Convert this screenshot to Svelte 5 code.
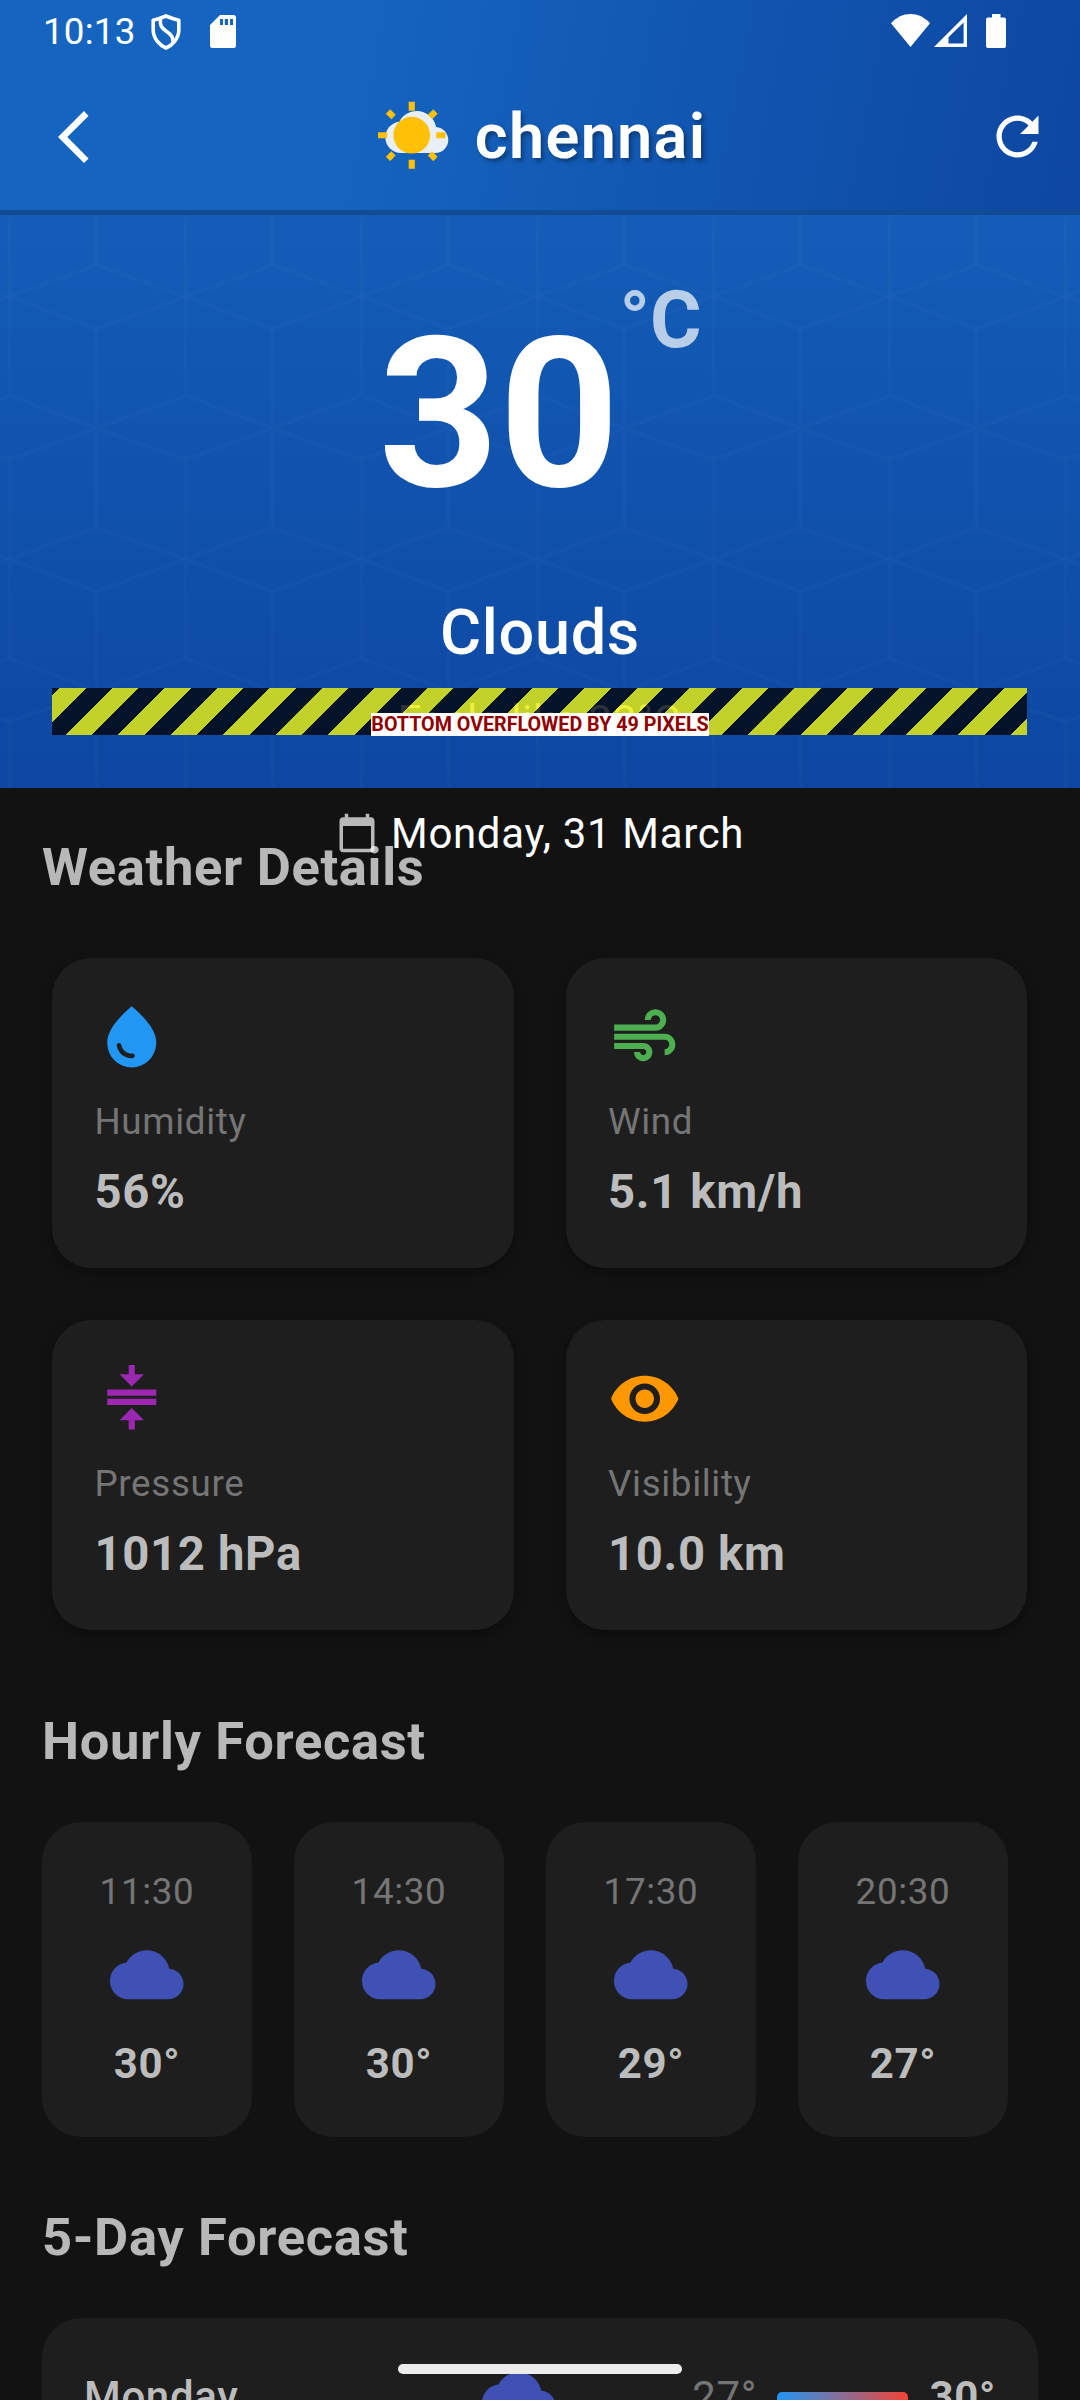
<script>
  const cloudPath =
    'M19.35 10.04C18.67 6.59 15.64 4 12 4 9.11 4 6.6 5.64 5.35 8.04 2.34 8.36 0 10.91 0 14c0 3.31 2.69 6 6 6h13c2.76 0 5-2.24 5-5 0-2.64-2.05-4.78-4.65-4.96z';

  const details = [
    {
      label: 'Humidity',
      value: '56%',
      tone: 'blue',
      path: 'M12 2c-5.33 4.55-8 8.48-8 11.8 0 4.98 3.8 8.2 8 8.2s8-3.22 8-8.2C20 10.48 17.33 6.55 12 2zM7.83 14c.37 0 .67.26.74.62.41 2.22 2.28 2.98 3.64 2.87.43-.02.79.32.79.75 0 .4-.32.73-.72.75-2.13.13-4.62-1.09-5.19-4.12-.08-.45.28-.87.74-.87z'
    },
    {
      label: 'Wind',
      value: '5.1 km/h',
      tone: 'green',
      path: 'M14.5 17c0 1.65-1.35 3-3 3s-3-1.35-3-3h2c0 .55.45 1 1 1s1-.45 1-1-.45-1-1-1H2v-2h9.5c1.65 0 3 1.35 3 3zM19 6.5C19 4.57 17.43 3 15.5 3S12 4.57 12 6.5h2c0-.83.67-1.5 1.5-1.5s1.5.67 1.5 1.5S16.33 8 15.5 8H2v2h13.5c1.93 0 3.5-1.57 3.5-3.5zm-.5 4.5H2v2h16.5c.83 0 1.5.67 1.5 1.5s-.67 1.5-1.5 1.5v2c1.93 0 3.5-1.57 3.5-3.5S20.43 11 18.5 11z'
    },
    {
      label: 'Pressure',
      value: '1012 hPa',
      tone: 'purple',
      path: 'M8 19h3v3h2v-3h3l-4-4-4 4zm8-15h-3V1h-2v3H8l4 4 4-4zM4 9v2h16V9H4zm0 3h16v2H4z'
    },
    {
      label: 'Visibility',
      value: '10.0 km',
      tone: 'orange',
      path: 'M12 4.5C7 4.5 2.73 7.61 1 12c1.73 4.39 6 7.5 11 7.5s9.27-3.11 11-7.5c-1.73-4.39-6-7.5-11-7.5zM12 17c-2.76 0-5-2.24-5-5s2.24-5 5-5 5 2.24 5 5-2.24 5-5 5zm0-8c-1.66 0-3 1.34-3 3s1.34 3 3 3 3-1.34 3-3-1.34-3-3-3z'
    }
  ];

  const hours = [
    { time: '11:30', temp: '30°' },
    { time: '14:30', temp: '30°' },
    { time: '17:30', temp: '29°' },
    { time: '20:30', temp: '27°' }
  ];

  const days = [{ day: 'Monday', low: '27°', high: '30°' }];
</script>

<div class="screen">
  <header class="header">
    <div class="status">
      <div class="status-left">
        <span class="clock">10:13</span>
        <svg class="shield" viewBox="0 0 30 36">
          <path d="M15 2Q21.500 4.800 27.800 6.300V16C27.800 24.500 21.500 31 15 34 8.500 31 2.200 24.500 2.200 16V6.300Q8.500 4.800 15 2Z" />
          <path d="M9.300 5C9 11 10 13.500 15 17 21 21 22.500 24 21.800 29" />
        </svg>
        <svg class="sd" viewBox="0 0 26 33" fill-rule="evenodd">
          <path d="M10 0H23.500A2.500 2.500 0 0 1 26 2.500V30.500A2.500 2.500 0 0 1 23.500 33H2.500A2.500 2.500 0 0 1 0 30.500V10zM10 4V10H13V4zM14.800 4V10H18V4zM20 4V10H23V4z" />
        </svg>
      </div>
      <div class="status-right">
        <svg class="wifi" viewBox="0 0 39 33"><path d="M0 9.300C11-3.100 28-3.100 39 9.300L19.500 33z" /></svg>
        <svg class="signal" viewBox="0 0 33 33" fill-rule="evenodd">
          <path d="M33 0V33H0zM29.600 8.500L14.500 23.300V29.500H29.600z" />
        </svg>
        <svg class="battery" viewBox="0 0 20 34">
          <path d="M6 0H14.500V3.500H18A2 2 0 0 1 20 5.500V32A2 2 0 0 1 18 34H2A2 2 0 0 1 0 32V5.500A2 2 0 0 1 2 3.500H6z" />
        </svg>
      </div>
    </div>
    <div class="appbar">
      <svg class="back" viewBox="0 0 31 52"><path d="M26 0L30.500 5 9.300 26 30.500 47.500 26 52 0 26z" /></svg>
      <div class="title">
        <svg class="title-icon" viewBox="0 0 73.5 73.5">
          <path class="cloud" transform="translate(10.3 0.6) scale(2.625)" d={cloudPath} />
          <path
            class="sun"
            transform="scale(3.0625)"
            d="M6.760 4.840l-1.800-1.790-1.410 1.410 1.790 1.790 1.420-1.410zM4 10.500H1v2h3v-2zm9-9.950h-2V3.500h2V.55zm7.450 3.910l-1.410-1.410-1.790 1.790 1.410 1.410 1.790-1.790zm-3.210 13.700l1.790 1.800 1.410-1.410-1.800-1.790-1.400 1.400zM20 10.500v2h3v-2h-3zm-8-5c-3.310 0-6 2.690-6 6s2.690 6 6 6 6-2.690 6-6-2.690-6-6-6zm-1 16.950h2V19.500h-2v2.950zm-7.450-3.910l1.410 1.410 1.790-1.800-1.410-1.410-1.790 1.800z"
          />
        </svg>
        <h1>chennai</h1>
      </div>
      <svg class="refresh" viewBox="0 0 24 24">
        <path d="M17.650 6.350C16.200 4.900 14.210 4 12 4c-4.420 0-7.990 3.580-7.990 8s3.570 8 7.990 8c3.730 0 6.840-2.550 7.730-6h-2.080c-.82 2.330-3.040 4-5.650 4-3.310 0-6-2.690-6-6s2.690-6 6-6c1.660 0 3.140.69 4.220 1.780L13 11h7V4l-2.350 2.350z" />
      </svg>
    </div>
  </header>

  <section class="hero">
    <svg class="mesh" width="1080" height="573">
      <defs>
        <pattern id="mesh" width="176" height="262.4" patternUnits="userSpaceOnUse" patternTransform="translate(9.5 49.5)">
          <path d="M0 32.300L87 0.500 176 32.300 87 64.500zM0 0V131M87 64.500V262.400M0 195V262.400M0 131L87 164 176 131M0 195L87 164 176 195M176 0V131M176 195V262.400" />
        </pattern>
      </defs>
      <rect width="1080" height="573" fill="url(#mesh)" />
    </svg>
    <div class="temp"><span class="degrees">30</span><span class="unit">°C</span></div>
    <p class="condition">Clouds</p>
    <div class="overflow">
      <p class="feels">Feels like 33°C</p>
      <div class="stripes"><span>BOTTOM OVERFLOWED BY 49 PIXELS</span></div>
    </div>
    <div class="date">
      <svg viewBox="0 0 24 24">
        <path d="M20 3h-1V1h-2v2H7V1H5v2H4c-1.100 0-2 .9-2 2v16c0 1.100.9 2 2 2h16c1.100 0 2-.9 2-2V5c0-1.100-.9-2-2-2zm0 18H4V8h16v13z" />
      </svg>
      <span>Monday, 31 March</span>
    </div>
  </section>

  <main>
    <h2>Weather Details</h2>
    <div class="details">
      {#each details as item}
        <article class="card detail">
          <svg class={item.tone} viewBox="0 0 24 24"><path d={item.path} /></svg>
          <span class="label">{item.label}</span>
          <strong>{item.value}</strong>
        </article>
      {/each}
    </div>

    <h2 class="hourly-title">Hourly Forecast</h2>
    <div class="hours">
      {#each hours as hour}
        <article class="card hour">
          <span>{hour.time}</span>
          <svg class="indigo" viewBox="0 0 24 24"><path d={cloudPath} /></svg>
          <strong>{hour.temp}</strong>
        </article>
      {/each}
    </div>

    <h2 class="daily-title">5-Day Forecast</h2>
    <div class="card days">
      {#each days as row}
        <div class="day">
          <span class="name">{row.day}</span>
          <svg class="indigo" viewBox="0 0 24 24"><path d={cloudPath} /></svg>
          <span class="low">{row.low}</span>
          <i class="range"></i>
          <strong>{row.high}</strong>
        </div>
      {/each}
    </div>
  </main>
  <div class="home-bar"></div>
</div>

<style>
  :global(body) {
    margin: 0;
    background: #121212;
  }
  h1,
  h2,
  p {
    margin: 0;
  }
  svg {
    display: block;
    flex: none;
    fill: #fff;
  }
  .screen {
    position: relative;
    width: 1080px;
    height: 2400px;
    overflow: hidden;
    background: #121212;
    color: #fff;
    font-family: Roboto, sans-serif;
    letter-spacing: 0.656px;
  }

  .header {
    height: 210px;
    background: linear-gradient(101deg, #1565c0 30%, #0d47a1 100%);
  }
  .status {
    display: flex;
    justify-content: space-between;
    align-items: flex-start;
    height: 63px;
    box-sizing: border-box;
    padding: 13px 74.500px 0 43px;
  }
  .status-left,
  .status-right {
    display: flex;
    align-items: flex-start;
  }
  .clock {
    font-size: 36.75px;
    line-height: 37px;
    letter-spacing: 0.2px;
    width: 107.500px;
  }
  .shield {
    width: 30px;
    height: 36px;
    margin-top: 0.500px;
    fill: none;
    stroke: #fff;
    stroke-width: 3.600;
    stroke-linejoin: round;
  }
  .sd {
    width: 26px;
    height: 33px;
    margin: 2px 0 0 29.500px;
  }
  .wifi {
    width: 39px;
    height: 33px;
    margin-top: 1px;
  }
  .signal {
    width: 33px;
    height: 33px;
    margin: 1px 0 0 4px;
  }
  .battery {
    width: 20px;
    height: 34px;
    margin: 1px 0 0 19px;
  }
  .appbar {
    display: grid;
    grid-template-columns: 100px 1fr 100px;
    align-items: center;
    height: 147px;
  }
  .back {
    width: 31px;
    height: 52px;
    margin-left: 58px;
  }
  .refresh {
    width: 63px;
    height: 63px;
    margin-left: 5.500px;
  }
  .title {
    display: flex;
    justify-content: center;
    align-items: center;
    gap: 26.250px;
    padding-left: 1.500px;
  }
  .title-icon {
    width: 73.500px;
    height: 73.500px;
  }
  .cloud {
    opacity: 0.9;
  }
  .sun {
    fill: #ffc107;
  }
  h1 {
    font-size: 63px;
    font-weight: 600;
    line-height: 74px;
    letter-spacing: 1.3px;
    text-shadow: 2.600px 2.600px 4px rgba(0, 0, 0, 0.35);
  }

  .hero {
    position: relative;
    display: flex;
    flex-direction: column;
    align-items: center;
    box-sizing: border-box;
    height: 578px;
    border-top: 5px solid #104b93;
    padding-top: 65.700px;
    background: linear-gradient(#135db8, #0d47a1);
  }
  .mesh {
    position: absolute;
    inset: 0;
  }
  .mesh path {
    fill: none;
    stroke: #fff;
    stroke-opacity: 0.019;
    stroke-width: 3;
  }
  .temp {
    position: relative;
    display: flex;
    align-items: flex-start;
    font-weight: 700;
    letter-spacing: 0;
  }
  .degrees {
    margin-top: 28px;
    font-size: 210px;
    line-height: 210px;
  }
  .unit {
    font-size: 78.750px;
    line-height: 79px;
    opacity: 0.7;
  }
  .condition {
    position: relative;
    margin-top: 82px;
    font-size: 63px;
    font-weight: 500;
    line-height: 63px;
  }
  .overflow {
    position: relative;
    width: 975px;
    height: 47px;
    margin: 24.300px 1px 0 0;
  }
  .feels {
    padding-top: 11.600px;
    font-size: 42px;
    line-height: 42px;
    text-align: center;
    color: rgba(255, 255, 255, 0.7);
  }
  .stripes {
    position: absolute;
    inset: 0;
    display: flex;
    justify-content: center;
    align-items: flex-end;
    background: repeating-linear-gradient(
      135deg,
      rgba(0, 0, 0, 0.75) 0 5.600px,
      rgba(255, 255, 0, 0.75) 5.600px 24.160px,
      rgba(0, 0, 0, 0.75) 24.160px 37.123px
    );
  }
  .stripes span {
    margin: 0 0 -1px 1px;
    background: #fff;
    color: #900000;
    font-size: 19.690px;
    font-weight: 700;
    line-height: 23px;
    letter-spacing: 0;
    white-space: nowrap;
  }
  .date {
    position: relative;
    display: flex;
    align-items: flex-start;
    gap: 13.125px;
    margin-top: 77px;
    font-size: 42px;
    line-height: 44px;
  }
  .date svg {
    width: 42px;
    height: 42px;
    opacity: 0.7;
  }

  main {
    padding: 52.600px 42px 0;
  }
  h2 {
    font-size: 52.500px;
    font-weight: 700;
    line-height: 53px;
    color: rgba(255, 255, 255, 0.7);
  }
  .card {
    border-radius: 39.400px;
    background: #1e1e1e;
    color: #bcbcbc;
  }
  .details {
    display: grid;
    grid-template-columns: 1fr 1fr;
    gap: 52px;
    margin-top: 64.400px;
    padding: 0 11px 0 10px;
  }
  .detail {
    display: flex;
    flex-direction: column;
    box-sizing: border-box;
    height: 310px;
    padding: 42px 42px 42px 42.500px;
    box-shadow: 0 5px 13px rgba(0, 0, 0, 0.3);
  }
  .detail svg {
    width: 73.500px;
    height: 73.500px;
  }
  .label {
    margin-top: 29.500px;
    font-size: 36.750px;
    line-height: 37px;
    color: #757575;
  }
  .detail strong {
    margin-top: 29px;
    font-size: 47.250px;
    font-weight: 700;
    line-height: 47px;
  }
  .blue {
    fill: #2196f3;
  }
  .green {
    fill: #4caf50;
  }
  .purple {
    fill: #9c27b0;
  }
  .orange {
    fill: #ff9800;
  }
  .indigo {
    width: 73.500px;
    height: 73.500px;
    fill: #3f51b5;
  }
  .hourly-title {
    margin-top: 84.600px;
  }
  .hours {
    display: flex;
    gap: 42px;
    margin-top: 54.400px;
  }
  .hour {
    display: flex;
    flex-direction: column;
    align-items: center;
    box-sizing: border-box;
    width: 210px;
    height: 315px;
    padding-top: 51px;
  }
  .hour span {
    margin-bottom: 28.400px;
    font-size: 36.750px;
    line-height: 37px;
    color: #757575;
  }
  .hour strong {
    margin-top: 30.700px;
    font-size: 42px;
    font-weight: 700;
    line-height: 42px;
  }
  .daily-title {
    margin-top: 73.600px;
  }
  .days {
    height: 400px;
    margin-top: 54px;
    padding: 42px 42px 0;
  }
  .day {
    display: flex;
    align-items: center;
    height: 73.500px;
    font-size: 42px;
    line-height: 44px;
  }
  .name {
    width: 397.500px;
    padding-top: 2px;
    font-weight: 500;
  }
  .low {
    margin-left: auto;
    padding-top: 2px;
    color: #757575;
  }
  .range {
    width: 131.250px;
    height: 13px;
    margin: 5px 21px 0 20px;
    border-radius: 5px;
    background: linear-gradient(90deg, #2196f3, #f44336);
  }
  .day strong {
    padding-top: 2px;
    font-weight: 700;
  }
  .home-bar {
    position: absolute;
    left: 398px;
    bottom: 26px;
    width: 284px;
    height: 10px;
    border-radius: 5px;
    background: #ececec;
  }
</style>
